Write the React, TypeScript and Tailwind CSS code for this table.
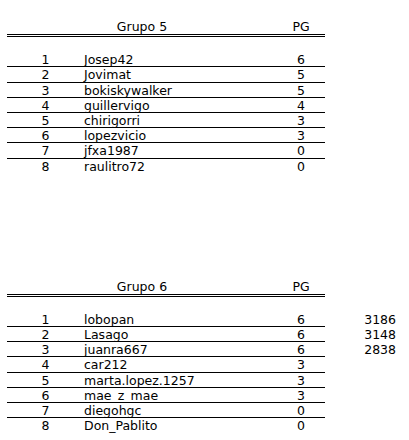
const grupos = [
  {
    titulo: "Grupo 5",
    filas: [
      ["1", "Josep42", "6", ""],
      ["2", "Jovimat", "5", ""],
      ["3", "bokiskywalker", "5", ""],
      ["4", "guillervigo", "4", ""],
      ["5", "chirigorri", "3", ""],
      ["6", "lopezvicio", "3", ""],
      ["7", "jfxa1987", "0", ""],
      ["8", "raulitro72", "0", ""],
    ],
  },
  {
    titulo: "Grupo 6",
    filas: [
      ["1", "lobopan", "6", "3186"],
      ["2", "Lasago", "6", "3148"],
      ["3", "juanra667", "6", "2838"],
      ["4", "car212", "3", ""],
      ["5", "marta.lopez.1257", "3", ""],
      ["6", "mae_z_mae", "3", ""],
      ["7", "diegohgc", "0", ""],
      ["8", "Don_Pablito", "0", ""],
    ],
  },
];

function Tabla({ titulo, filas }: { titulo: string; filas: string[][] }) {
  return (
    <div className="flex flex-col">
      <div className="flex h-[18px] w-[318px] border-b-[3px] border-double border-black leading-[15px]">
        <div className="w-[270px] text-center">{titulo}</div>
        <div className="w-[48px] text-center">PG</div>
      </div>
      <div className="h-[15.2px]" />
      {filas.map((f, i) => (
        <div key={i} className="flex h-[15.2px]">
          <div
            className={
              "flex w-[318px] pt-px leading-[14px] " +
              (i < filas.length - 1 ? "border-b border-black" : "")
            }
          >
            <div className="w-[77px] text-center">{f[0]}</div>
            <div className="w-[193px]">{f[1]}</div>
            <div className="w-[48px] text-center">{f[2]}</div>
          </div>
          <div className="w-[71px] pt-px text-right leading-[14px]">{f[3]}</div>
        </div>
      ))}
    </div>
  );
}

export default function App() {
  return (
    <div
      className="flex h-[440px] w-[409px] flex-col gap-[105px] bg-white pl-[7px] pt-[19px] text-[12.5px] text-black"
      style={{ fontFamily: '"DejaVu Sans", Verdana, sans-serif' }}
    >
      {grupos.map((g) => (
        <Tabla key={g.titulo} titulo={g.titulo} filas={g.filas} />
      ))}
    </div>
  );
}
